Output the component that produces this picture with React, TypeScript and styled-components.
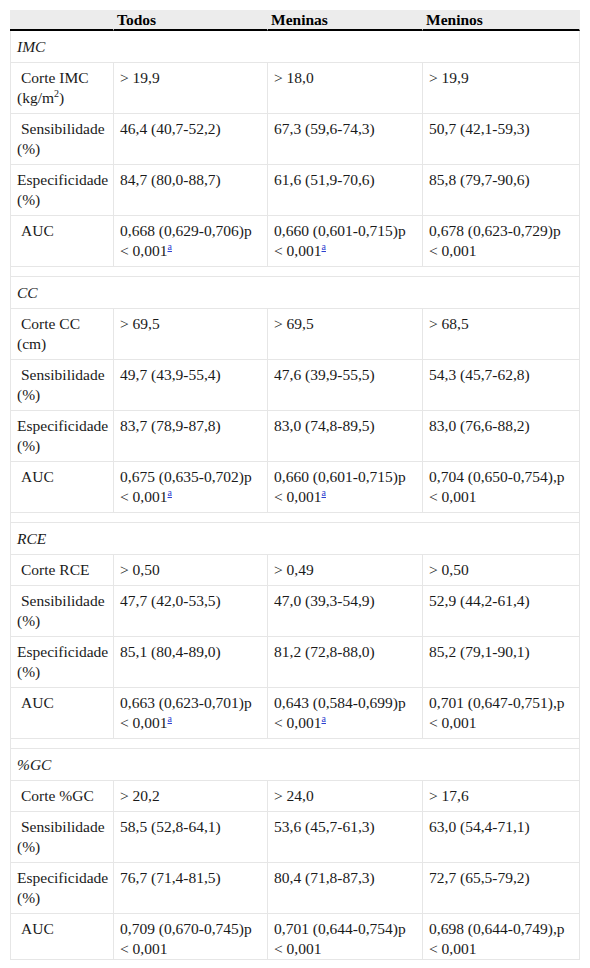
import styled, { createGlobalStyle } from "styled-components";

const GlobalStyle = createGlobalStyle`
  body {
    margin: 0;
    background: #fff;
    font-family: "Liberation Serif", "Times New Roman", serif;
  }
`;

const Table = styled.table`
  margin: 10px;
  width: 570px;
  table-layout: fixed;
  border-collapse: separate;
  border-spacing: 0;
  font-family: "Liberation Serif", "Times New Roman", serif;
  font-size: 15.5px;
  line-height: 20px;
  color: #1a1a1a;
`;

const HeadCell = styled.th<{ $w: number }>`
  box-sizing: border-box;
  width: ${(p) => p.$w}px;
  background: #ececec;
  border-right: 1px solid #ececec;
  border-bottom: 2px solid #000;
  padding: 0 3px;
  line-height: 19px;
  text-align: left;
  vertical-align: top;
  font-weight: bold;
  color: #000;
`;

const Cell = styled.td<{ $first?: boolean; $indent?: boolean; $last?: boolean }>`
  box-sizing: border-box;
  border-right: 1px solid #e6e6e6;
  border-bottom: 1px solid #e6e6e6;
  border-left: ${(p) => (p.$first ? "1px solid #e6e6e6" : "none")};
  padding: 5px 5px ${(p) => (p.$last ? "0" : "5px")} 6px;
  text-indent: ${(p) => (p.$indent ? "4px" : "0")};
  vertical-align: top;
  text-align: left;
`;

const SectionCell = styled.td`
  border: 1px solid #e6e6e6;
  border-top: none;
  padding: 6px 6px 5px;
  font-style: italic;
`;

const SpacerCell = styled.td`
  border: 1px solid #e6e6e6;
  border-top: none;
  height: 9px;
  padding: 0;
`;

const Sup = styled.sup`
  font-size: 10px;
  line-height: 0;
`;

const Note = styled.a`
  font-size: 10px;
  line-height: 0;
  vertical-align: super;
  color: #2a3fd0;
  text-decoration: underline;
`;

type Row = {
  label: React.ReactNode;
  indent?: boolean;
  values: [string, string, string];
  notes?: [boolean, boolean, boolean];
};

type Section = { name: string; rows: Row[] };

const lt = "<\u00a00,001";

const sections: Section[] = [
  {
    name: "IMC",
    rows: [
      {
        label: (
          <>
            Corte IMC (kg/m<Sup>2</Sup>)
          </>
        ),
        indent: true,
        values: ["> 19,9", "> 18,0", "> 19,9"],
      },
      { label: "Sensibilidade (%)", indent: true, values: ["46,4 (40,7-52,2)", "67,3 (59,6-74,3)", "50,7 (42,1-59,3)"] },
      { label: "Especificidade (%)", values: ["84,7 (80,0-88,7)", "61,6 (51,9-70,6)", "85,8 (79,7-90,6)"] },
      {
        label: "AUC",
        indent: true,
        values: [`0,668 (0,629-0,706)p ${lt}`, `0,660 (0,601-0,715)p ${lt}`, `0,678 (0,623-0,729)p ${lt}`],
        notes: [true, true, false],
      },
    ],
  },
  {
    name: "CC",
    rows: [
      { label: "Corte CC (cm)", indent: true, values: ["> 69,5", "> 69,5", "> 68,5"] },
      { label: "Sensibilidade (%)", indent: true, values: ["49,7 (43,9-55,4)", "47,6 (39,9-55,5)", "54,3 (45,7-62,8)"] },
      { label: "Especificidade (%)", values: ["83,7 (78,9-87,8)", "83,0 (74,8-89,5)", "83,0 (76,6-88,2)"] },
      {
        label: "AUC",
        indent: true,
        values: [`0,675 (0,635-0,702)p ${lt}`, `0,660 (0,601-0,715)p ${lt}`, `0,704 (0,650-0,754),p ${lt}`],
        notes: [true, true, false],
      },
    ],
  },
  {
    name: "RCE",
    rows: [
      { label: "Corte RCE", indent: true, values: ["> 0,50", "> 0,49", "> 0,50"] },
      { label: "Sensibilidade (%)", indent: true, values: ["47,7 (42,0-53,5)", "47,0 (39,3-54,9)", "52,9 (44,2-61,4)"] },
      { label: "Especificidade (%)", values: ["85,1 (80,4-89,0)", "81,2 (72,8-88,0)", "85,2 (79,1-90,1)"] },
      {
        label: "AUC",
        indent: true,
        values: [`0,663 (0,623-0,701)p ${lt}`, `0,643 (0,584-0,699)p ${lt}`, `0,701 (0,647-0,751),p ${lt}`],
        notes: [true, true, false],
      },
    ],
  },
  {
    name: "%GC",
    rows: [
      { label: "Corte %GC", indent: true, values: ["> 20,2", "> 24,0", "> 17,6"] },
      { label: "Sensibilidade (%)", indent: true, values: ["58,5 (52,8-64,1)", "53,6 (45,7-61,3)", "63,0 (54,4-71,1)"] },
      { label: "Especificidade (%)", values: ["76,7 (71,4-81,5)", "80,4 (71,8-87,3)", "72,7 (65,5-79,2)"] },
      {
        label: "AUC",
        indent: true,
        values: [`0,709 (0,670-0,745)p ${lt}`, `0,701 (0,644-0,754)p ${lt}`, `0,698 (0,644-0,749),p ${lt}`],
      },
    ],
  },
];

export default function App() {
  return (
    <>
      <GlobalStyle />
      <Table>
        <thead>
          <tr>
            <HeadCell $w={104}></HeadCell>
            <HeadCell $w={154}>Todos</HeadCell>
            <HeadCell $w={155}>Meninas</HeadCell>
            <HeadCell $w={157}>Meninos</HeadCell>
          </tr>
        </thead>
        <tbody>
          {sections.map((s, si) => {
            const lastSection = si === sections.length - 1;
            return [
              <tr key={s.name + "-h"}>
                <SectionCell colSpan={4}>{s.name}</SectionCell>
              </tr>,
              ...s.rows.map((r, ri) => {
                const last = lastSection && ri === s.rows.length - 1;
                return (
                  <tr key={s.name + ri}>
                    <Cell $first $indent={r.indent} $last={last}>
                      {r.label}
                    </Cell>
                    {r.values.map((v, vi) => (
                      <Cell key={vi} $last={last}>
                        {v}
                        {r.notes && r.notes[vi] && <Note href="#">a</Note>}
                      </Cell>
                    ))}
                  </tr>
                );
              }),
              !lastSection && (
                <tr key={s.name + "-sp"}>
                  <SpacerCell colSpan={4} />
                </tr>
              ),
            ];
          })}
        </tbody>
      </Table>
    </>
  );
}
